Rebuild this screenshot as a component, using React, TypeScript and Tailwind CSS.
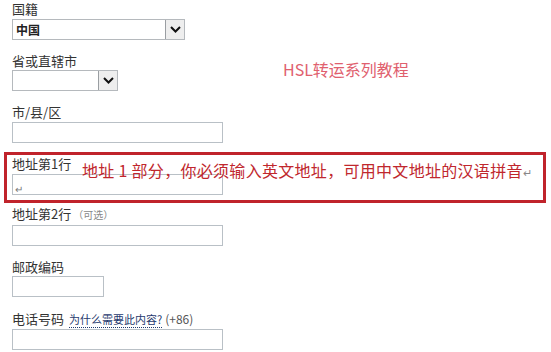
import React from "react";

const font = { fontFamily: '"Noto Sans CJK SC", "Liberation Sans", sans-serif' };

function Label({ children, className = "" }: { children: React.ReactNode; className?: string }) {
  return (
    <div className={`h-[18px] text-[13px] leading-[18px] text-[#333] ${className}`}>{children}</div>
  );
}

function TextBox({ w, children }: { w: string; children?: React.ReactNode }) {
  return (
    <div className={`${w} h-[21px] border border-[#b9c0c6] bg-white relative`}>{children}</div>
  );
}

function Chevron() {
  return (
    <svg width="11" height="7" viewBox="0 0 11 7">
      <path d="M1 1 L5.5 5.5 L10 1" fill="none" stroke="#111" strokeWidth="2" />
    </svg>
  );
}

function Select({ w, value }: { w: string; value?: string }) {
  return (
    <div className={`${w} h-[21px] border border-[#b5b9bd] bg-white flex items-stretch`}>
      <div className="flex-1 pl-[3px] text-[12px] leading-[19px] font-bold text-[#222]">{value}</div>
      <div className="w-[19px] border-l border-[#9a9ea2] bg-[#eeeeee] flex items-center justify-center">
        <Chevron />
      </div>
    </div>
  );
}

export default function App() {
  return (
    <div className="relative w-[551px] h-[352px] bg-white overflow-hidden" style={font}>
      <div className="pl-[12px]">
        <Label>国籍</Label>
        <div className="mt-[1px]">
          <Select w="w-[173px]" value="中国" />
        </div>
        <Label className="mt-[12px]">省或直辖市</Label>
        <Select w="w-[106px]" />
        <Label className="mt-[12px]">市/县/区</Label>
        <div className="mt-[1px]">
          <TextBox w="w-[211px]" />
        </div>
      </div>

      <div className="relative mt-[9px] ml-[4px] w-[542px] h-[51px] border-[3px] border-[#c0232b] pl-[5px]">
        <Label>地址第1行</Label>
        <div className="mt-[1px]">
          <TextBox w="w-[211px]">
            <span className="absolute left-[2px] bottom-[-2px] text-[10px] text-[#777]">↵</span>
          </TextBox>
        </div>
        <div className="absolute left-[75px] top-[4px] text-[16px] leading-[22px] text-[#c0272d] whitespace-nowrap tracking-[0.3px]">
          地址 1 部分，你必须输入英文地址，可用中文地址的汉语拼音
          <span className="text-[11px] text-[#888]">↵</span>
        </div>
      </div>

      <div className="pl-[12px]">
        <Label className="mt-[2px]">
          地址第2行<span className="ml-[2px] text-[10px] text-[#888]">（可选）</span>
        </Label>
        <div className="mt-[2px]">
          <TextBox w="w-[211px]" />
        </div>
        <Label className="mt-[12px]">邮政编码</Label>
        <TextBox w="w-[92px]" />
        <Label className="mt-[13px]">
          电话号码
          <span className="ml-[5px] text-[11px] text-[#1f3a6e] border-b border-dotted border-[#1f3a6e]">
            为什么需要此内容?
          </span>
          <span className="ml-[3px] text-[12px] text-[#555]">(+86)</span>
        </Label>
        <div className="mt-[1px]">
          <TextBox w="w-[211px]" />
        </div>
      </div>

      <div className="absolute left-[283px] top-[59px] text-[16px] leading-[20px] text-[#e0606e]">
        HSL转运系列教程
      </div>
    </div>
  );
}
